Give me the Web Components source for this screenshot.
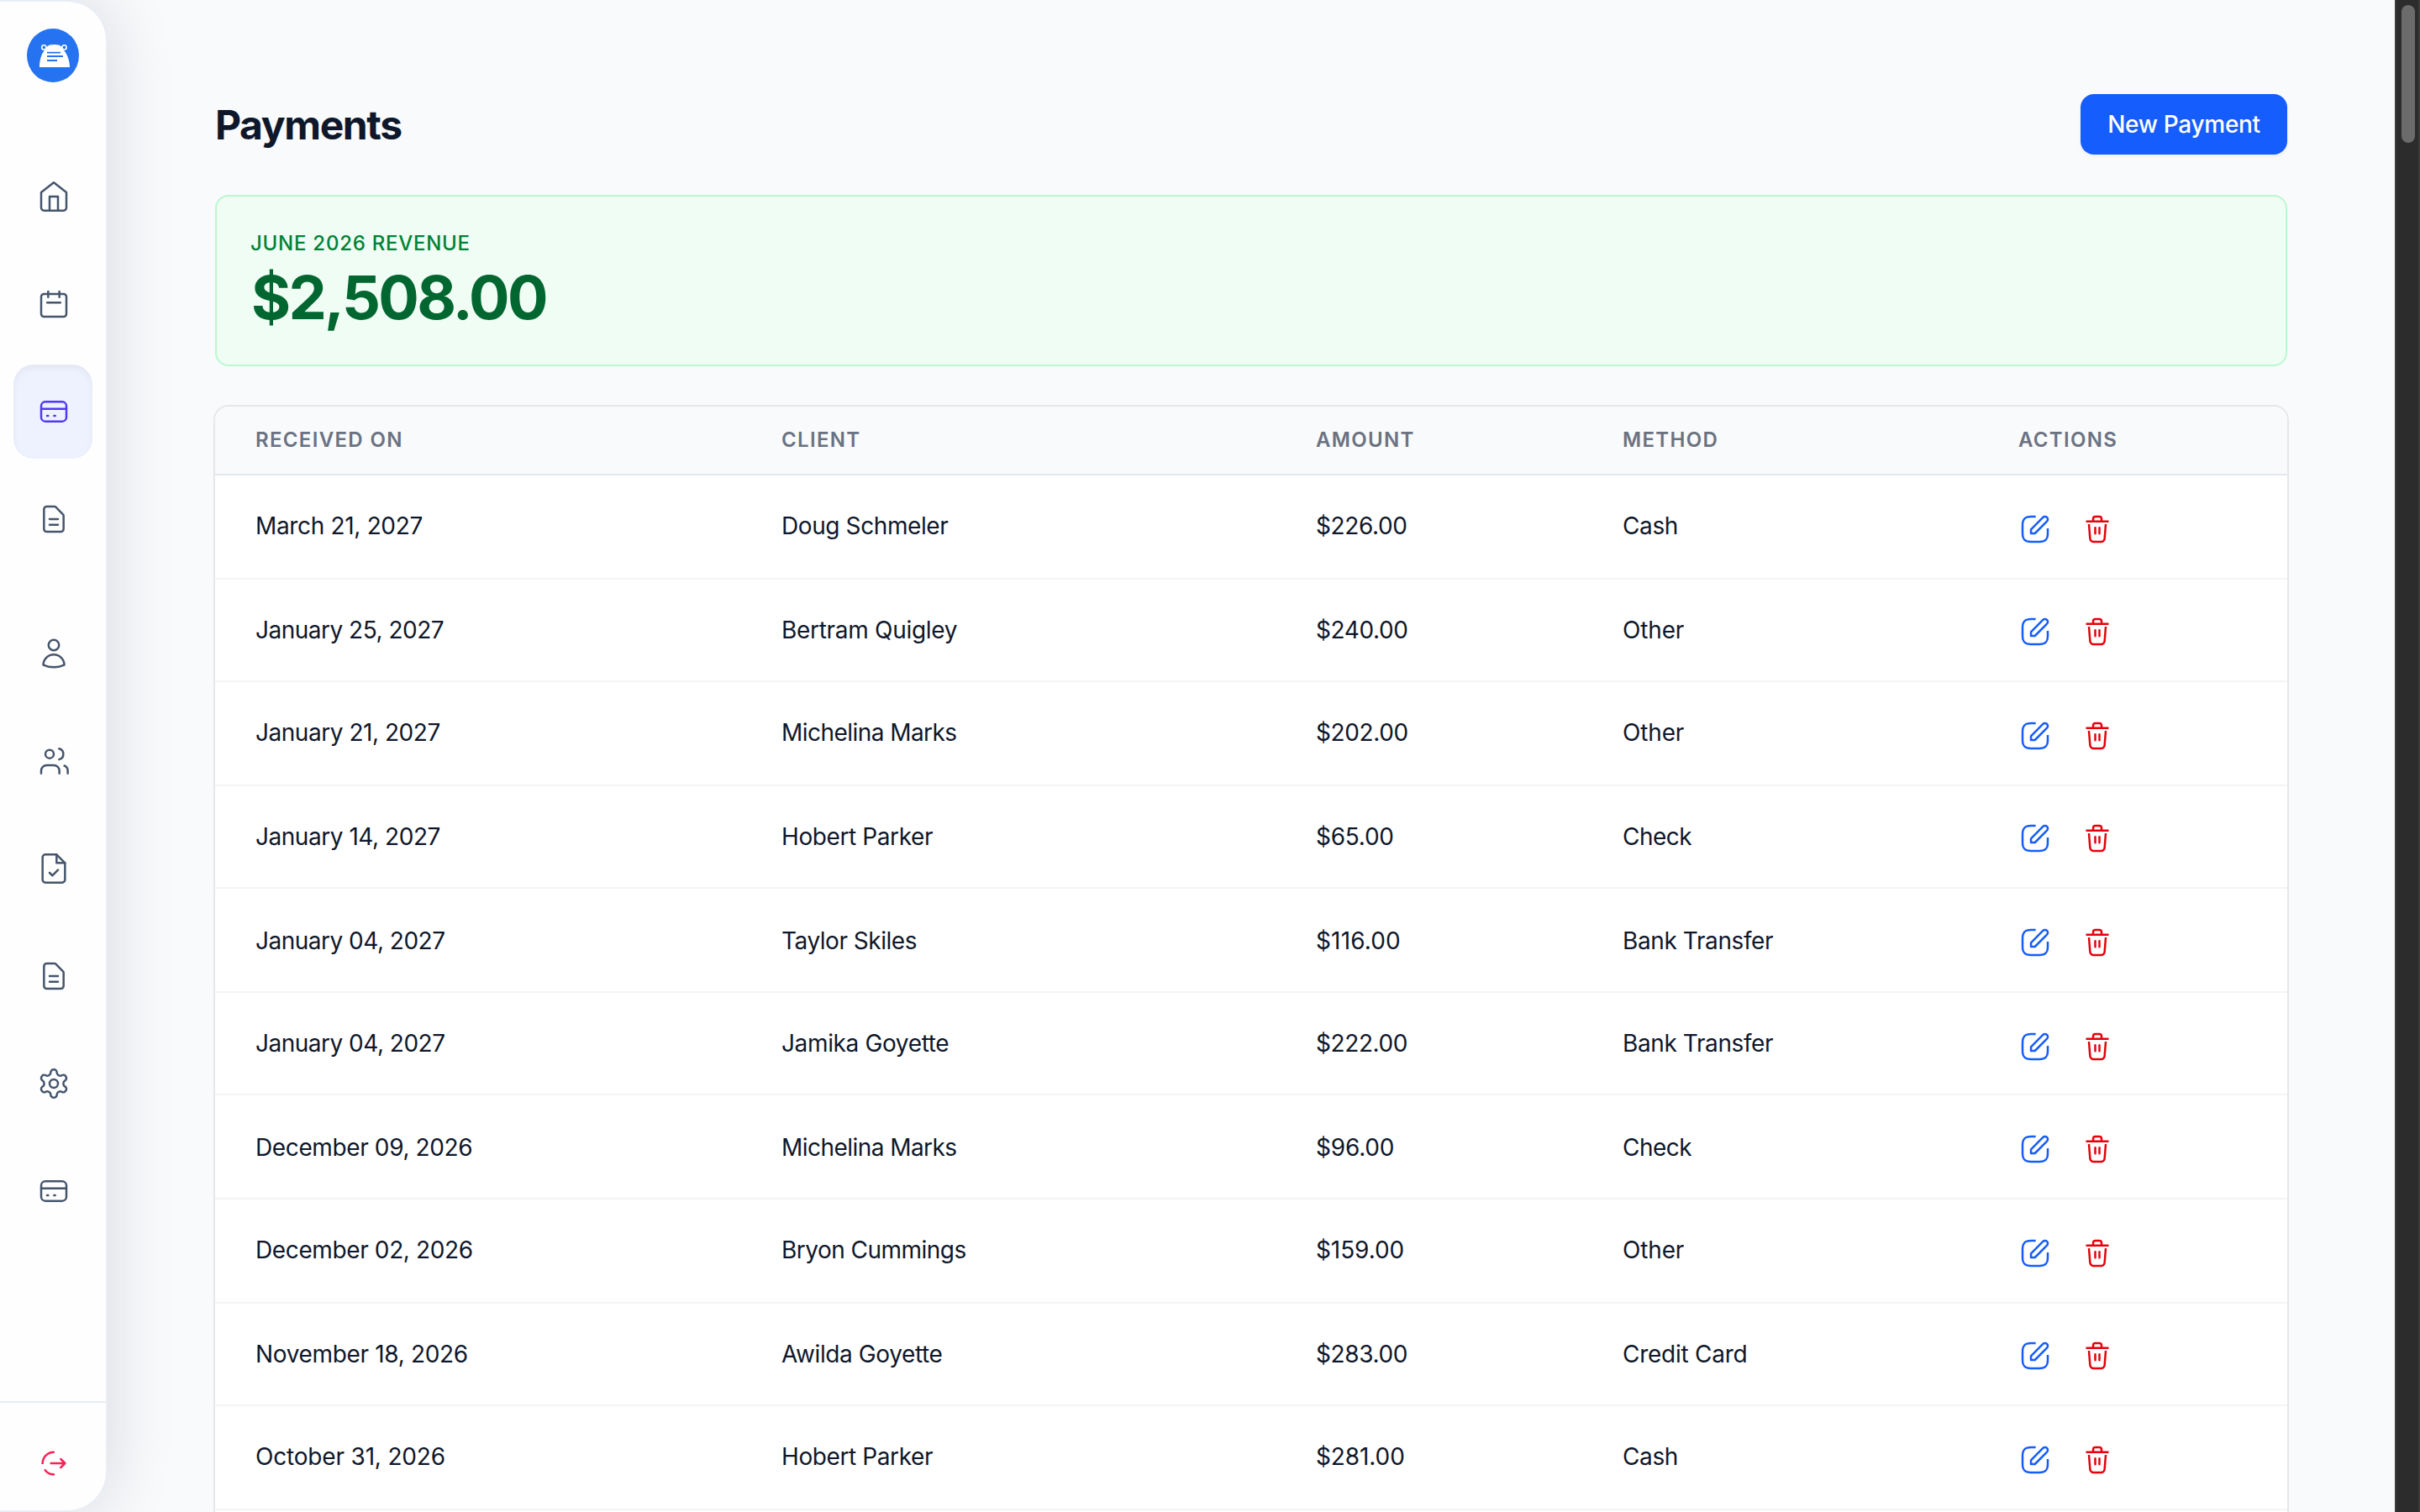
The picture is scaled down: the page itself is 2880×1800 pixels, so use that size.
<!DOCTYPE html>
<html lang="en">
<head>
<meta charset="utf-8">
<title>Payments</title>
<style>
html,body{margin:0;height:100%;overflow:hidden;background:#f9fafc;font-family:Inter,"Liberation Sans",sans-serif;color:#0f172a}
</style>
</head>
<body>
<payments-app></payments-app>
<script>
const ICONS={
home:'<path d="M3 9l9-7 9 7v11a2 2 0 0 1-2 2H5a2 2 0 0 1-2-2z"/><path d="M9 22V12h6v10"/>',
calendar:'<rect x="3" y="4.8" width="18" height="16.2" rx="2"/><path d="M8 3v4M16 3v4M7.3 10.9h9.4"/>',
card:'<rect x="3" y="5" width="18" height="14" rx="3"/><path d="M3 10h18M7.2 15h.8M12.2 15h.8"/>',
doc:'<path d="M9 12h6m-6 4h6m2 5H7a2 2 0 0 1-2-2V5a2 2 0 0 1 2-2h5.586a1 1 0 0 1 .707.293l5.414 5.414a1 1 0 0 1 .293.707V19a2 2 0 0 1-2 2z"/>',
user:'<path d="M15.75 6a3.75 3.75 0 1 1-7.5 0 3.75 3.75 0 0 1 7.5 0zM4.501 20.118a7.5 7.5 0 0 1 14.998 0A17.933 17.933 0 0 1 12 21.75c-2.676 0-5.216-.584-7.499-1.632z"/>',
users:'<circle cx="9" cy="7" r="3"/><path stroke-linecap="butt" d="M3 21.4V19a4 4 0 0 1 4-4h5a4 4 0 0 1 4 4v2.4M22 21.4V19a4 4 0 0 0-3-3.85"/><path d="M15.8 3.13a4 4 0 0 1 0 7.75"/>',
check:'<path d="M14 2H6a2 2 0 0 0-2 2v16a2 2 0 0 0 2 2h12a2 2 0 0 0 2-2V8z"/><path d="M14 2v6h6M9 15l2 2 4-4"/>',
gear:'<path d="M12.22 2h-.44a2 2 0 0 0-2 2v.18a2 2 0 0 1-1 1.73l-.43.25a2 2 0 0 1-2 0l-.15-.08a2 2 0 0 0-2.73.73l-.22.38a2 2 0 0 0 .73 2.73l.15.1a2 2 0 0 1 1 1.72v.51a2 2 0 0 1-1 1.74l-.15.09a2 2 0 0 0-.73 2.73l.22.38a2 2 0 0 0 2.73.73l.15-.08a2 2 0 0 1 2 0l.43.25a2 2 0 0 1 1 1.73V20a2 2 0 0 0 2 2h.44a2 2 0 0 0 2-2v-.18a2 2 0 0 1 1-1.73l.43-.25a2 2 0 0 1 2 0l.15.08a2 2 0 0 0 2.73-.73l.22-.39a2 2 0 0 0-.73-2.73l-.15-.08a2 2 0 0 1-1-1.74v-.5a2 2 0 0 1 1-1.74l.15-.09a2 2 0 0 0 .73-2.73l-.22-.38a2 2 0 0 0-2.73-.73l-.15.08a2 2 0 0 1-2 0l-.43-.25a2 2 0 0 1-1-1.73V4a2 2 0 0 0-2-2z"/><circle cx="12" cy="12" r="3"/>',
logout:'<path stroke-linecap="butt" d="M12.5 4H12a8 8 0 0 0-8 8v.6"/><path d="M12 20a8 8 0 0 1-6.2-3.1M10 12h10m-3-3 3 3-3 3"/>',
edit:'<path stroke-linecap="butt" d="M12.4 3H9C4.7 3 3 4.7 3 9v6c0 4.3 1.7 6 6 6h6c4.3 0 6-1.7 6-6v-3.6"/><path d="M17.586 3.586a2 2 0 1 1 2.828 2.828L11.828 15H9v-2.828z"/>',
trash:'<path d="M4.5 6.4h15M9 6.2V4.6A1.6 1.6 0 0 1 10.6 3h2.8A1.6 1.6 0 0 1 15 4.6v1.6"/><path stroke-linecap="butt" d="M6 8.4l.8 10.1A2.6 2.6 0 0 0 9.4 21h5.2a2.6 2.6 0 0 0 2.6-2.5L18 8.4"/><path d="M10.5 11v4.2M13.5 11v4.2"/>'
};
const define=(name,render)=>customElements.define(name,class extends HTMLElement{
  constructor(){super();this.attachShadow({mode:'open'})}
  connectedCallback(){this.shadowRoot.innerHTML=render(this)}
});

define('ui-icon',el=>`<style>:host{display:block;flex:none;width:40px;height:40px}svg{display:block;width:100%;height:100%;overflow:visible}</style>
<svg viewBox="0 0 24 24" fill="none" stroke="currentColor" stroke-width="1.5" stroke-linecap="round" stroke-linejoin="round">${ICONS[el.getAttribute('name')]}</svg>`);

define('brand-logo',()=>`<style>:host{display:block;width:62px;height:64px}svg{display:block}</style>
<svg width="62" height="64" viewBox="0 0 62 64"><ellipse cx="31" cy="32" rx="31" ry="32" fill="#2573f0"/>
<g fill="none" stroke="#fff" stroke-width="1.6"><circle cx="20.3" cy="22.4" r="2.6"/><circle cx="44.5" cy="22.4" r="2.6"/></g>
<path fill="#fff" d="M15 46C15 38 17 31 20.500 26.500C22 23.500 24 21 27 19.600C30 18.700 35 18.700 38 19.600C41 21 43 23.500 44.500 26.500C48 31 51 38 51 46Z"/>
<path stroke="#2573f0" stroke-width="1.800" d="M24 28.600H40M24 33H43M24 38H36"/></svg>`);

define('nav-item',el=>`<style>:host{display:flex;align-items:center;box-sizing:border-box;height:112px;width:94px;padding-left:28px;border-radius:24px;color:#45556c}
:host([active]){background:#eef2ff;color:#4f39f6;box-shadow:inset 0 4px 8px rgba(0,0,0,.05)}</style>
<ui-icon name="${el.getAttribute('icon')}"></ui-icon>`);

define('side-bar',()=>`<style>
:host{display:flex;flex-direction:column;position:relative;z-index:1;box-sizing:border-box;width:128px;height:1800px;flex:none;background:#fefefe;border:2px solid #e9edf5;border-left:0;border-radius:0 48px 48px 0;box-shadow:0 0 80px rgba(15,23,42,.15)}
brand-logo{margin:32px 0 0 32px}
nav{display:flex;flex-direction:column;gap:16px;padding:80px 16px 0;flex:1}
nav-item[spaced]{margin-top:32px}
footer{box-sizing:border-box;height:130px;border-top:2px solid #e9edf5;padding:52px 0 0 44px;color:#ff2056}
</style><brand-logo></brand-logo>
<nav><nav-item icon="home"></nav-item><nav-item icon="calendar"></nav-item><nav-item icon="card" active></nav-item><nav-item icon="doc"></nav-item>
<nav-item icon="user" spaced></nav-item><nav-item icon="users"></nav-item><nav-item icon="check"></nav-item><nav-item icon="doc"></nav-item><nav-item icon="gear"></nav-item><nav-item icon="card"></nav-item></nav>
<footer><ui-icon name="logout"></ui-icon></footer>`);

define('primary-button',()=>`<style>:host{display:flex;align-items:center;justify-content:center;box-sizing:border-box;width:246px;height:72px;border-radius:16px;background:#155dfc;color:#fff;font-size:28px;line-height:40px;font-weight:450;letter-spacing:-.3px;white-space:nowrap;box-shadow:0 2px 4px rgba(0,0,0,.05)}</style><slot></slot>`);

define('page-header',()=>`<style>:host{display:flex;align-items:center;justify-content:space-between}h1{margin:2px 0 0;font-size:48px;line-height:64px;font-weight:700;letter-spacing:-1.4px}</style><h1><slot></slot></h1><slot name="action"></slot>`);

define('revenue-card',()=>`<style>:host{display:flex;flex-direction:column;gap:8px;box-sizing:border-box;height:204px;padding:40px;border:2px solid #b9f8cf;border-radius:16px;background:#f0fdf4}
.label{font-size:24px;line-height:32px;font-weight:450;letter-spacing:.75px;color:#008236}.value{font-size:72px;line-height:80px;font-weight:700;letter-spacing:-2.7px;color:#016630;padding-left:1px}</style>
<div class="label"><slot name="label"></slot></div><div class="value"><slot></slot></div>`);

const TRACKING={
'March 21, 2027':-.33,'January 25, 2027':-.5,'January 21, 2027':-.46,'January 14, 2027':-.46,'January 04, 2027':-.5,
'December 09, 2026':-.38,'December 02, 2026':-.38,'November 18, 2026':-.33,'October 31, 2026':-.18,
'Bertram Quigley':-.3,'Michelina Marks':-.55,'Taylor Skiles':-.48,'Jamika Goyette':-.36,'Bryon Cummings':-.52,
'$65.00':-.25,'$116.00':.15,'$96.00':-.2,'$159.00':-.1,'$281.00':-.1,
'Other':-.15,'Check':-.5,'Credit Card':-.25};

define('payment-row',el=>{const cells=el.getAttribute('data').split('|'),[h,t,i]=el.getAttribute('metrics').split(' ');
return `<style>:host{display:grid;grid-template-columns:var(--cols);padding-left:var(--inset);box-sizing:border-box;height:${h}px;border-bottom:2px solid #f3f4f6;font-size:28px;line-height:40px;background:#fff}
span{padding-top:${t}px;white-space:nowrap}div{display:flex;gap:34px;padding-top:${i}px}.e{color:#155dfc}.t{color:#e7000b}</style>
${cells.map(c=>`<span style="letter-spacing:${TRACKING[c]??-.4}px">${c}</span>`).join('')}<div><ui-icon class="e" name="edit"></ui-icon><ui-icon class="t" name="trash"></ui-icon></div>`});

const ROWS=[
['March 21, 2027|Doug Schmeler|$226.00|Cash','124 40 44'],
['January 25, 2027|Bertram Quigley|$240.00|Other','122 40 42'],
['January 21, 2027|Michelina Marks|$202.00|Other','124 40 44'],
['January 14, 2027|Hobert Parker|$65.00|Check','122 40 42'],
['January 04, 2027|Taylor Skiles|$116.00|Bank Transfer','124 42 44'],
['January 04, 2027|Jamika Goyette|$222.00|Bank Transfer','122 40 44'],
['December 09, 2026|Michelina Marks|$96.00|Check','124 42 44'],
['December 02, 2026|Bryon Cummings|$159.00|Other','124 40 44'],
['November 18, 2026|Awilda Goyette|$283.00|Credit Card','122 40 42'],
['October 31, 2026|Hobert Parker|$281.00|Cash','124 40 44']];

define('payment-table',()=>`<style>
:host{display:block;--cols:626px 636px 365px 471px 1fr;--inset:48px;border-radius:16px;overflow:hidden;box-shadow:0 0 0 2px #e5e7eb;background:#fff;height:1400px}
header{display:grid;grid-template-columns:var(--cols);padding:24px 0 24px var(--inset);border-bottom:2px solid #e5e7eb;background:#f9fafb;color:#6a7282;font-size:24px;line-height:32px;font-weight:600;letter-spacing:1.33px}
</style><header><span>RECEIVED ON</span><span>CLIENT</span><span>AMOUNT</span><span>METHOD</span><span>ACTIONS</span></header>
${ROWS.map(([d,m])=>`<payment-row data="${d}" metrics="${m}"></payment-row>`).join('')}`);

define('scroll-rail',()=>`<style>:host{display:block;box-sizing:border-box;flex:none;width:30px;height:1800px;padding:6px 0 0 6px;background:#2c2c2c;border-left:2px solid #3b3b3b;border-right:2px solid #3b3b3b}div{width:16px;height:164px;border-radius:8px;background:#6b6b6b}</style><div></div>`);

define('payments-app',()=>`<style>
:host{display:flex;width:2880px;height:1800px;overflow:hidden}
main{flex:1;min-width:0;box-sizing:border-box;padding:112px 128px 0;display:flex;flex-direction:column;gap:48px}
payment-table{flex:none}
</style><side-bar></side-bar><main>
<page-header>Payments<primary-button slot="action">New Payment</primary-button></page-header>
<revenue-card><span slot="label">JUNE 2026 REVENUE</span>$2,508.00</revenue-card>
<payment-table></payment-table></main><scroll-rail></scroll-rail>`);
</script>
</body>
</html>
